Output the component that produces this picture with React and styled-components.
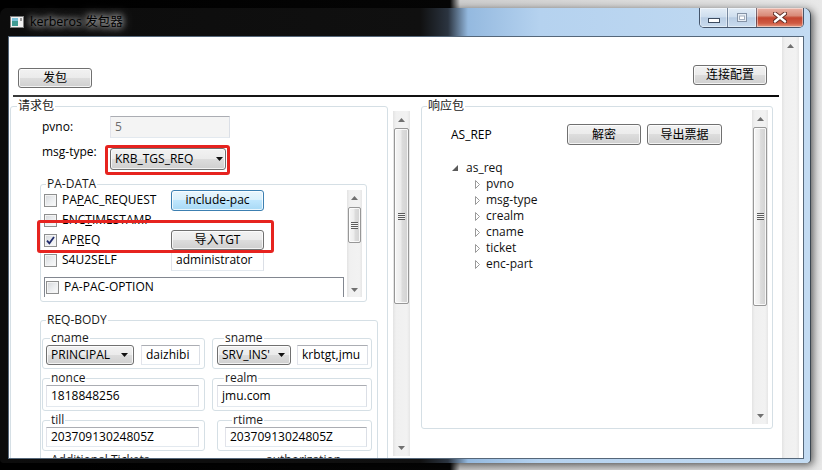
import React from "react";
import styled, { createGlobalStyle } from "styled-components";

const GlobalStyle = createGlobalStyle`
  html, body {
    margin: 0;
    padding: 0;
  }
  body {
    width: 822px;
    height: 470px;
    overflow: hidden;
    background: linear-gradient(90deg, #000 0, #060606 450px, #cfcfcf 460px, #e8e8e8 100%);
    font-family: "Open Sans", "Noto Sans CJK SC", sans-serif;
    font-size: 12px;
    color: #000;
  }
`;

const Window = styled.div`
  margin-top: 8px;
  width: 810px;
  height: 455px;
  box-sizing: border-box;
  padding: 0 6px 4px 8px;
  display: flex;
  flex-direction: column;
  border-radius: 7px 7px 4px 4px;
  background: linear-gradient(90deg, #0c0c0c 0, #101010 420px, #2b3440 448px, #94b9df 468px, #b5d2ef 540px, #c3dbf2 100%);
  box-shadow: 1px 0 0 #3b4650, 3px 2px 9px rgba(0, 0, 0, 0.65);
`;

const TitleBar = styled.div`
  height: 28px;
  flex: none;
  display: flex;
  align-items: flex-start;
`;

const AppIcon = styled.svg`
  margin: 8px 0 0 2px;
  flex: none;
`;

const Caption = styled.span`
  margin: 6px 0 0 6px;
  line-height: 16px;
  font-size: 12.5px;
  color: #000;
  text-shadow: 0 0 6px rgba(255, 255, 255, 0.95), 0 0 12px rgba(255, 255, 255, 0.8);
`;

const CaptionButtons = styled.div`
  margin-left: auto;
  display: flex;
  height: 19px;
  border: 1px solid rgba(28, 42, 62, 0.75);
  border-top: none;
  border-radius: 0 0 5px 5px;
  overflow: hidden;
`;

const CaptionButton = styled.div`
  width: ${p => p.$w}px;
  display: flex;
  align-items: center;
  justify-content: center;
  border-left: ${p => (p.$first ? "none" : "1px solid rgba(40, 60, 90, 0.55)")};
  box-shadow: inset 0 0 0 1px rgba(255, 255, 255, 0.45);
  background: ${p =>
    p.$close
      ? "linear-gradient(#eab3a6 0, #d98b79 40%, #c4452f 52%, #cf5a42 80%, #e79a80 100%)"
      : "linear-gradient(#e3edf7 0, #cfdeee 45%, #b9cde4 52%, #cadcee 100%)"};
`;

const Client = styled.div`
  flex: 1;
  min-height: 0;
  display: flex;
  background: #fff;
  border: 1px solid #55677a;
`;

const Main = styled.div`
  flex: 1;
  min-width: 0;
  display: flex;
  flex-direction: column;
`;

const Toolbar = styled.div`
  height: 51px;
  flex: none;
  display: flex;
  justify-content: space-between;
  align-items: flex-start;
  padding: 0 15px 0 9px;
`;

const Button = styled.div`
  box-sizing: border-box;
  flex: none;
  width: ${p => p.$w}px;
  height: ${p => p.$h || 20}px;
  margin-top: ${p => p.$top || 0}px;
  display: flex;
  align-items: center;
  justify-content: center;
  border: 1px solid ${p => (p.$hot ? "#3c7fb1" : "#707070")};
  border-radius: 3px;
  background: ${p =>
    p.$hot
      ? "linear-gradient(#eaf6fd 0, #d9f0fc 49%, #bee6fd 50%, #a7d9f5 100%)"
      : "linear-gradient(#f2f2f2 0, #ebebeb 49%, #dddddd 50%, #cfcfcf 100%)"};
  box-shadow: inset 0 0 0 1px rgba(255, 255, 255, 0.75);
  line-height: 16px;
  white-space: nowrap;
`;

const Separator = styled.div`
  height: 2px;
  flex: none;
  margin: 7px 3px 0 4px;
  background: linear-gradient(90deg, #3a3a3a 0, #151515 30%, #0a0a0a 100%);
`;

const Panels = styled.div`
  flex: 1;
  min-height: 0;
  display: flex;
  padding-top: 1px;
`;

const LeftPanel = styled.div`
  margin-left: 1px;
  width: 400px;
  flex: none;
  display: flex;
  gap: 5px;
  align-items: flex-start;
  overflow: hidden;
`;

const GroupBox = styled.fieldset`
  margin: ${p => p.$top || 0}px 0 0 ${p => p.$left || 0}px;
  padding: 0;
  min-width: 0;
  box-sizing: border-box;
  flex: none;
  width: ${p => p.$w}px;
  height: ${p => (p.$h ? `${p.$h}px` : "auto")};
  border: 1px solid #d5dfe5;
  border-radius: 3px;
  position: relative;
`;

const GroupTitle = styled.legend`
  margin-left: ${p => p.$indent}px;
  padding: 0 1px;
  line-height: ${p => p.$lh || 16}px;
  color: #1a1a1a;
`;

const RequestBody = styled.div`
  padding-left: 29px;
  display: flex;
  flex-direction: column;
  align-items: flex-start;
`;

const FieldGrid = styled.div`
  display: grid;
  grid-template-columns: 68px auto;
  row-gap: 10px;
  align-items: center;
  margin: 2px 0 0 2px;
`;

const Label = styled.span`
  line-height: 16px;
  align-self: ${p => (p.$top ? "start" : "center")};
  margin-top: ${p => (p.$top ? "-4px" : "0")};
`;

const TextBox = styled.div`
  box-sizing: border-box;
  flex: none;
  width: ${p => p.$w}px;
  height: ${p => p.$h || 20}px;
  display: flex;
  align-items: center;
  padding-left: 4px;
  border: 1px solid;
  border-color: #abadb3 #dbdfe6 #e3e9ef #e2e3ea;
  background: ${p => (p.$disabled ? "#f4f4f4" : "#fff")};
  color: ${p => (p.$disabled ? "#6d6d6d" : "#000")};
  white-space: nowrap;
  overflow: hidden;
  line-height: 16px;
`;

const ComboWrap = styled.div`
  position: relative;
  width: ${p => p.$w}px;
`;

const Combo = styled(Button)`
  justify-content: space-between;
  padding: 0 ${p => p.$arrowPad || 4}px 0 4px;
  overflow: hidden;
`;

const Mark = styled.div`
  position: absolute;
  box-sizing: border-box;
  border: 3px solid #e6231f;
  border-radius: 3px;
  pointer-events: none;
  top: ${p => p.$t}px;
  left: ${p => p.$l}px;
  width: ${p => p.$w}px;
  height: ${p => p.$h}px;
`;

const PaList = styled.div`
  position: relative;
  display: flex;
  margin: -2px 4px 4px 0;
`;

const ListViewport = styled.div`
  flex: 1;
  height: 107px;
  overflow: hidden;
  padding-left: 3px;
`;

const PaRows = styled.div`
  display: grid;
  grid-template-columns: 127px 93px;
  grid-auto-rows: 20px;
  align-items: center;
`;

const CheckRow = styled.div`
  display: flex;
  align-items: center;
  gap: 5px;
  height: ${p => p.$h || 20}px;
  padding-left: ${p => p.$indent || 0}px;
  white-space: nowrap;
  line-height: 16px;
`;

const Box = styled.span`
  box-sizing: border-box;
  flex: none;
  width: 13px;
  height: 13px;
  display: flex;
  align-items: center;
  justify-content: center;
  border: 1px solid #8e8f8f;
  background: linear-gradient(135deg, #d5d7da 0, #eceef0 55%, #fbfbfb 100%);
  box-shadow: inset 0 0 0 1px #f4f4f4;
`;

const OptionBox = styled.div`
  width: 300px;
  box-sizing: border-box;
  margin-top: 7px;
  border: 1px solid #828790;
  padding: 1px 0 0 1px;
`;

const ReqGrid = styled.div`
  display: grid;
  grid-template-columns: 163px 160px;
  column-gap: 7px;
  row-gap: 2px;
  margin: 3px 0 0 1px;
`;

const SubBox = styled.fieldset`
  margin: 0 0 0 ${p => p.$left || 0}px;
  padding: 0 4px 3px ${p => p.$pad || 3}px;
  min-width: 0;
  border: 1px solid #d5dfe5;
  border-radius: 3px;
  display: flex;
  gap: ${p => p.$gap || 7}px;
`;

const ResponseInner = styled.div`
  display: flex;
  height: 314px;
`;

const ResponseContent = styled.div`
  flex: 1;
  padding: 10px 0 0 29px;
`;

const ResponseHead = styled.div`
  display: flex;
  align-items: center;
  gap: 6px;
`;

const HeadLabel = styled.span`
  width: 110px;
  line-height: 16px;
`;

const Tree = styled.div`
  margin-top: 15px;
`;

const TreeItem = styled.div`
  display: flex;
  align-items: center;
  gap: ${p => (p.$root ? 8 : 6)}px;
  height: 16px;
  line-height: 16px;
  padding-left: ${p => (p.$root ? 1 : 24)}px;
  color: #111;
`;

const ScrollTrack = styled.div`
  flex: none;
  width: ${p => p.$w}px;
  height: ${p => (p.$h ? `${p.$h}px` : "auto")};
  margin: ${p => p.$top || 0}px ${p => p.$right || 0}px 0 0;
  display: flex;
  flex-direction: column;
  align-items: center;
  background: linear-gradient(90deg, #e3e3e3 0, #f0f0f0 18%, #f2f2f2 82%, #e6e6e6 100%);
`;

const ArrowCell = styled.div`
  flex: none;
  height: ${p => p.$size}px;
  width: 100%;
  display: flex;
  align-items: center;
  justify-content: center;
  margin-top: ${p => (p.$bottom ? "auto" : "0")};
`;

const Thumb = styled.div`
  box-sizing: border-box;
  width: calc(100% - 2px);
  height: ${p => p.$size}px;
  margin-top: ${p => p.$offset || 0}px;
  display: flex;
  align-items: center;
  justify-content: center;
  border: 1px solid #979797;
  border-radius: 2px;
  background: linear-gradient(90deg, #f6f6f6 0, #ececec 45%, #dcdcdc 55%, #d2d2d2 100%);
  box-shadow: inset 0 0 0 1px rgba(255, 255, 255, 0.8);
`;

const Grip = styled.span`
  width: 7px;
  height: 7px;
  background: repeating-linear-gradient(180deg, #5c5c5c 0 1px, #f4f4f4 1px 2px);
`;

const Gutter = styled.div`
  width: 4px;
  flex: none;
`;

const ArrowGlyph = ({ down }) => (
  <svg width="7" height="4" viewBox="0 0 7 4">
    <polygon points={down ? "0,0 7,0 3.5,4" : "0,4 7,4 3.5,0"} fill="#707070" />
  </svg>
);

const ScrollBar = ({ w = 17, h, top, right, cell = 17, thumb, offset, bare }) => (
  <ScrollTrack $w={w} $h={h} $top={top} $right={right}>
    <ArrowCell $size={cell}>
      <ArrowGlyph />
    </ArrowCell>
    {thumb && (
      <Thumb $size={thumb} $offset={offset}>
        <Grip />
      </Thumb>
    )}
    {!bare && (
      <ArrowCell $size={cell} $bottom>
        <ArrowGlyph down />
      </ArrowCell>
    )}
  </ScrollTrack>
);

const DropArrow = () => (
  <svg width="7" height="4" viewBox="0 0 7 4" style={{ flex: "none" }}>
    <polygon points="0,0 7,0 3.5,4" fill="#111" />
  </svg>
);

const Check = ({ checked, label, h }) => (
  <CheckRow $h={h}>
    <Box>
      {checked && (
        <svg width="9" height="9" viewBox="0 0 9 9">
          <path d="M1 4.6 L3.4 7.4 L8 1" fill="none" stroke="#1f2a6b" strokeWidth="1.8" />
        </svg>
      )}
    </Box>
    <span>{label}</span>
  </CheckRow>
);

const Expanded = () => (
  <svg width="6" height="6" viewBox="0 0 6 6">
    <polygon points="6,0 6,6 0,6" fill="#5a5a5a" />
  </svg>
);

const Collapsed = () => (
  <svg width="5" height="9" viewBox="0 0 5 9">
    <polygon points="0.5,0.5 4.5,4.5 0.5,8.5" fill="#fff" stroke="#9a9a9a" strokeWidth="1" />
  </svg>
);

const treeChildren = ["pvno", "msg-type", "crealm", "cname", "ticket", "enc-part"];

export default function App() {
  return (
    <>
      <GlobalStyle />
      <Window>
        <TitleBar>
          <AppIcon width="14" height="12" viewBox="0 0 14 12">
            <rect x="0.5" y="0.5" width="13" height="11" fill="#f2f2f2" stroke="#7d7d7d" />
            <rect x="2" y="2" width="6" height="8" fill="#3f9a92" />
            <rect x="2" y="2" width="6" height="3" fill="#7cc2d9" />
            <rect x="10" y="2" width="2" height="3" fill="#9a9a9a" />
          </AppIcon>
          <Caption>kerberos 发包器</Caption>
          <CaptionButtons>
            <CaptionButton $w={27} $first>
              <svg width="12" height="5" viewBox="0 0 12 5" style={{ marginTop: 5 }}>
                <rect x="0.5" y="0.5" width="11" height="4" fill="#fff" stroke="#3d4c60" />
              </svg>
            </CaptionButton>
            <CaptionButton $w={28}>
              <svg width="10" height="9" viewBox="0 0 10 9">
                <rect x="0.5" y="0.5" width="9" height="8" fill="#e8eef5" stroke="#8593a6" />
                <rect x="2.5" y="3" width="5" height="3.5" fill="#fff" stroke="#a3afbf" />
              </svg>
            </CaptionButton>
            <CaptionButton $w={46} $close>
              <svg width="14" height="11" viewBox="0 0 14 11">
                <path d="M2 1.5 L12 9.5 M12 1.5 L2 9.5" stroke="#5a2a22" strokeWidth="4.2" strokeLinecap="round" />
                <path d="M2 1.5 L12 9.5 M12 1.5 L2 9.5" stroke="#fff" strokeWidth="2.4" strokeLinecap="round" />
              </svg>
            </CaptionButton>
          </CaptionButtons>
        </TitleBar>

        <Client>
          <Main>
            <Toolbar>
              <Button $w={74} $top={31}>发包</Button>
              <Button $w={74} $top={28}>连接配置</Button>
            </Toolbar>
            <Separator />
            <Panels>
              <LeftPanel>
                <GroupBox $w={378}>
                  <GroupTitle $indent={6}>请求包</GroupTitle>
                  <RequestBody>
                    <FieldGrid>
                      <Label>pvno:</Label>
                      <TextBox $w={120} $h={22} $disabled>5</TextBox>
                      <Label $top>msg-type:</Label>
                      <ComboWrap $w={116}>
                        <Combo $w={116} $h={22} $arrowPad={2}>
                          <span>KRB_TGS_REQ</span>
                          <DropArrow />
                        </Combo>
                        <Mark $t={-3} $l={-5} $w={125} $h={30} />
                      </ComboWrap>
                    </FieldGrid>

                    <GroupBox $w={327} $top={6}>
                      <GroupTitle $indent={5}>PA-DATA</GroupTitle>
                      <PaList>
                        <ListViewport>
                          <PaRows>
                            <Check label={<>PA<u>P</u>AC_REQUEST</>} />
                            <Button $w={93} $h={21} $hot>include-pac</Button>
                            <Check label={<>ENC<u>T</u>IMESTAMP</>} />
                            <span />
                            <Check checked label={<>AP<u>R</u>EQ</>} />
                            <Button $w={93} $h={20}>导入TGT</Button>
                            <Check label="S4U2SELF" />
                            <TextBox $w={93} $h={21}>administrator</TextBox>
                          </PaRows>
                          <OptionBox>
                            <Check label="PA-PAC-OPTION" h={16} />
                            <CheckRow $indent={40} $h={16}>
                              <Box />
                              <span>Claims</span>
                            </CheckRow>
                          </OptionBox>
                        </ListViewport>
                        <ScrollBar w={15} h={107} cell={15} thumb={36} offset={2} />
                        <Mark $t={30} $l={-4} $w={237} $h={33} />
                      </PaList>
                    </GroupBox>

                    <GroupBox $w={338} $top={10}>
                      <GroupTitle $indent={5}>REQ-BODY</GroupTitle>
                      <ReqGrid>
                        <SubBox>
                          <GroupTitle $indent={4} $lh={14}>cname</GroupTitle>
                          <Combo $w={88} $arrowPad={5}>
                            <span>PRINCIPAL</span>
                            <DropArrow />
                          </Combo>
                          <TextBox $w={59}>daizhibi</TextBox>
                        </SubBox>
                        <SubBox $pad={4} $gap={6}>
                          <GroupTitle $indent={7} $lh={14}>sname</GroupTitle>
                          <Combo $w={74} $arrowPad={5}>
                            <span>SRV_INS'</span>
                            <DropArrow />
                          </Combo>
                          <TextBox $w={71}>krbtgt,jmu</TextBox>
                        </SubBox>
                        <SubBox>
                          <GroupTitle $indent={4} $lh={14}>nonce</GroupTitle>
                          <TextBox $w={153} $h={22}>1818848256</TextBox>
                        </SubBox>
                        <SubBox $pad={4}>
                          <GroupTitle $indent={7} $lh={14}>realm</GroupTitle>
                          <TextBox $w={150} $h={22}>jmu.com</TextBox>
                        </SubBox>
                        <SubBox>
                          <GroupTitle $indent={4} $lh={14}>till</GroupTitle>
                          <TextBox $w={153}>20370913024805Z</TextBox>
                        </SubBox>
                        <SubBox $left={5} $pad={7}>
                          <GroupTitle $indent={7} $lh={14}>rtime</GroupTitle>
                          <TextBox $w={142}>20370913024805Z</TextBox>
                        </SubBox>
                        <SubBox>
                          <GroupTitle $indent={4} $lh={14}>Additional Tickets</GroupTitle>
                          <TextBox $w={153} />
                        </SubBox>
                        <SubBox $left={5} $pad={7}>
                          <GroupTitle $indent={40} $lh={14}>authorization-data</GroupTitle>
                          <TextBox $w={142} />
                        </SubBox>
                      </ReqGrid>
                    </GroupBox>
                  </RequestBody>
                </GroupBox>
                <ScrollBar w={17} h={345} top={13} thumb={176} />
              </LeftPanel>

              <GroupBox $w={352} $h={331} $left={11}>
                <GroupTitle $indent={5}>响应包</GroupTitle>
                <ResponseInner>
                  <ResponseContent>
                    <ResponseHead>
                      <HeadLabel>AS_REP</HeadLabel>
                      <Button $w={74} $h={21}>解密</Button>
                      <Button $w={75} $h={21}>导出票据</Button>
                    </ResponseHead>
                    <Tree>
                      <TreeItem $root>
                        <Expanded />
                        <span>as_req</span>
                      </TreeItem>
                      {treeChildren.map(name => (
                        <TreeItem key={name}>
                          <Collapsed />
                          <span>{name}</span>
                        </TreeItem>
                      ))}
                    </Tree>
                  </ResponseContent>
                  <ScrollBar w={16} h={314} top={-4} right={4} thumb={179} />
                </ResponseInner>
              </GroupBox>
            </Panels>
          </Main>
          <ScrollBar w={17} bare />
          <Gutter />
        </Client>
      </Window>
    </>
  );
}
